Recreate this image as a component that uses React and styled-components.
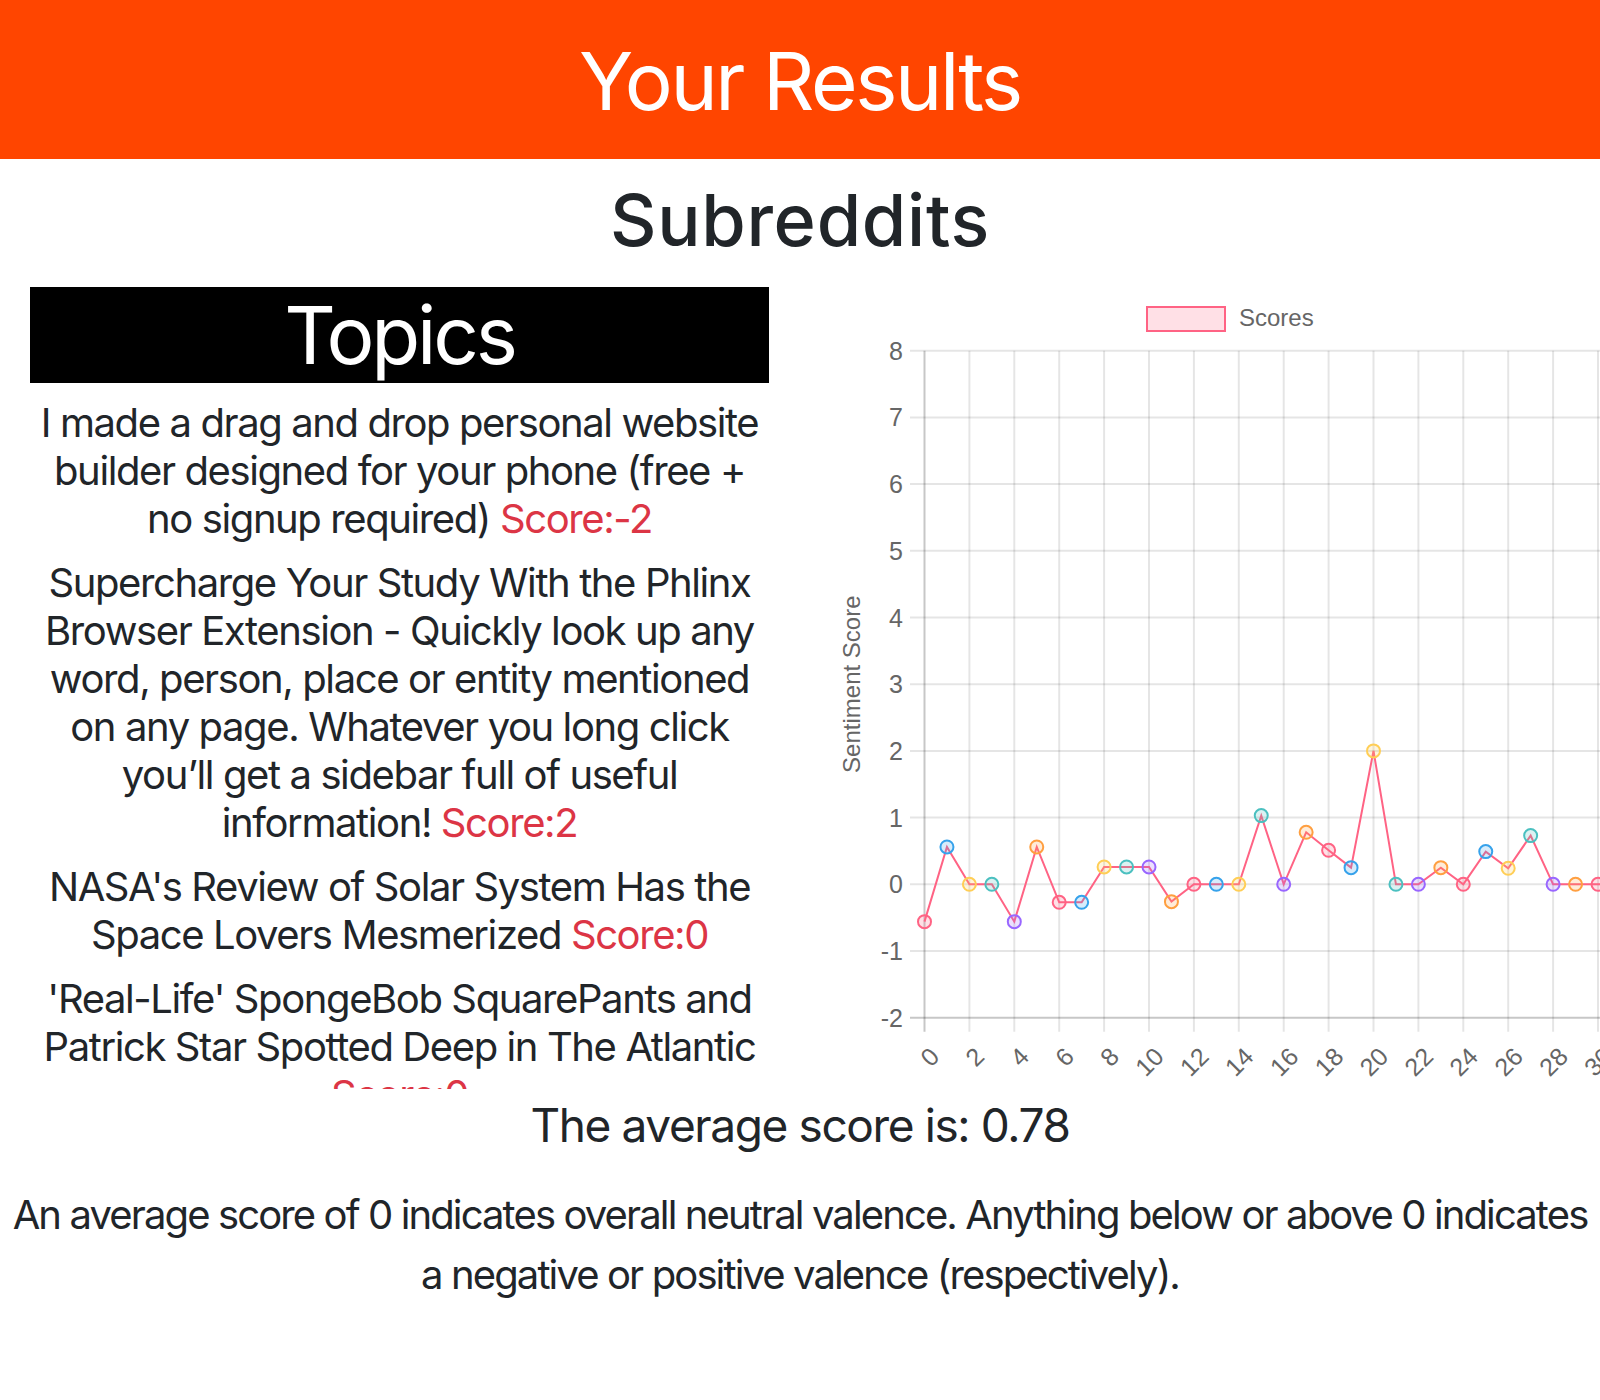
import React from "react";
import styled, { createGlobalStyle } from "styled-components";

const GlobalStyle = createGlobalStyle`
  body {
    margin: 0;
    font-family: Inter, "Noto Sans", sans-serif;
    color: #212529;
    background: #fff;
    overflow-x: hidden;
  }
`;

const Banner = styled.header`
  background-color: #ff4500;
  padding: 33px 0 30px;
`;

const BannerTitle = styled.h1`
  margin: 0;
  color: #fff;
  text-align: center;
  font-size: 80px;
  font-weight: 400;
  line-height: 1.2;
  letter-spacing: -0.03em;
`;

const SectionTitle = styled.h2`
  margin: 18px 0 24px;
  text-align: center;
  font-size: 72px;
  font-weight: 500;
  line-height: 1.2;
  letter-spacing: 0.01em;
`;

const Row = styled.div`
  display: grid;
  grid-template-columns: 800px 800px;
  height: 802px;
  overflow: hidden;
`;

const TopicsColumn = styled.div`
  padding: 0 31px 0 30px;
  overflow: hidden;
`;

const TopicsHeader = styled.div`
  background: #000;
  color: #fff;
  text-align: center;
  font-size: 80px;
  line-height: 1.2;
  letter-spacing: -0.04em;
`;

const Topic = styled.h3`
  margin: 16px 0 0;
  text-align: center;
  font-size: 40px;
  font-weight: 400;
  line-height: 1.2;
  letter-spacing: -0.035em;
`;

const Score = styled.span`
  color: #dc3545;
`;

const ChartColumn = styled.div`
  overflow: hidden;
  svg {
    display: block;
    font-family: "Liberation Sans", Arial, sans-serif;
  }
`;

const Average = styled.h2`
  margin: 9px 0 0;
  text-align: center;
  font-size: 46px;
  font-weight: 400;
  line-height: 1.2;
  letter-spacing: -0.03em;
`;

const Note = styled.p`
  margin: 31px 0 0;
  text-align: center;
  font-size: 40px;
  line-height: 1.5;
  letter-spacing: -0.047em;
`;

const topics = [
  {
    title:
      "I made a drag and drop personal website builder designed for your phone (free + no signup required)",
    score: -2,
  },
  {
    title:
      "Supercharge Your Study With the Phlinx Browser Extension - Quickly look up any word, person, place or entity mentioned on any page. Whatever you long click you’ll get a sidebar full of useful information!",
    score: 2,
  },
  {
    title: "NASA's Review of Solar System Has the Space Lovers Mesmerized",
    score: 0,
  },
  {
    title:
      "'Real-Life' SpongeBob SquarePants and Patrick Star Spotted Deep in The Atlantic",
    score: 0,
  },
];

const scores = [
  -0.56, 0.56, 0, 0, -0.56, 0.56, -0.27, -0.27, 0.26, 0.26, 0.26, -0.26, 0, 0,
  0, 1.03, 0, 0.78, 0.51, 0.25, 2, 0, 0, 0.25, 0, 0.49, 0.24, 0.73, 0, 0, 0, 0,
];

const palette = [
  "255,99,132",
  "54,162,235",
  "255,206,86",
  "75,192,192",
  "153,102,255",
  "255,159,64",
];

const X0 = 124.5;
const STEP = 22.45;
const Y_TOP = 63.7;
const UNIT = 66.7;
const cx = (i) => X0 + i * STEP;
const cy = (v) => Y_TOP + (8 - v) * UNIT;

function ScoreChart() {
  const yTicks = [8, 7, 6, 5, 4, 3, 2, 1, 0, -1, -2];
  const xTicks = [];
  for (let i = 0; i <= 30; i += 2) xTicks.push(i);
  const bottom = cy(-2);

  return (
    <svg width="800" height="802">
      {/* legend */}
      <rect
        x="347"
        y="20"
        width="78"
        height="24"
        fill="rgba(255,99,132,0.2)"
        stroke="rgb(255,99,132)"
        strokeWidth="2"
      />
      <text x="439" y="39" fontSize="24" fill="#666">
        Scores
      </text>

      {/* grid */}
      {yTicks.map((v) => (
        <g key={v}>
          <line
            x1="110"
            x2="800"
            y1={cy(v)}
            y2={cy(v)}
            stroke={v === -2 ? "rgba(0,0,0,0.22)" : "rgba(0,0,0,0.1)"}
            strokeWidth="2"
          />
          <text
            x="103"
            y={cy(v)}
            fontSize="25"
            fill="#666"
            textAnchor="end"
            dominantBaseline="central"
          >
            {v}
          </text>
        </g>
      ))}
      {xTicks.map((i) => (
        <g key={i}>
          <line
            x1={cx(i)}
            x2={cx(i)}
            y1={cy(8)}
            y2={bottom + 14}
            stroke={i === 0 ? "rgba(0,0,0,0.22)" : "rgba(0,0,0,0.1)"}
            strokeWidth="2"
          />
          <text
            transform={`translate(${cx(i) + 10}, ${bottom + 34}) rotate(-45)`}
            fontSize="25"
            fill="#666"
            textAnchor="end"
            dominantBaseline="central"
          >
            {i}
          </text>
        </g>
      ))}

      <text
        transform={`translate(60, ${(cy(8) + bottom) / 2}) rotate(-90)`}
        fontSize="24"
        fill="#666"
        textAnchor="middle"
      >
        Sentiment Score
      </text>

      {/* data */}
      <polyline
        points={scores.map((v, i) => `${cx(i)},${cy(v)}`).join(" ")}
        fill="none"
        stroke="rgb(255,99,132)"
        strokeWidth="2"
      />
      {scores.map((v, i) => {
        const c = palette[i % palette.length];
        return (
          <circle
            key={i}
            cx={cx(i)}
            cy={cy(v)}
            r="6.5"
            fill={`rgba(${c},0.2)`}
            stroke={`rgb(${c})`}
            strokeWidth="2"
          />
        );
      })}
    </svg>
  );
}

export default function App() {
  return (
    <>
      <GlobalStyle />
      <Banner>
        <BannerTitle>Your Results</BannerTitle>
      </Banner>
      <SectionTitle>Subreddits</SectionTitle>
      <Row>
        <TopicsColumn>
          <TopicsHeader>Topics</TopicsHeader>
          {topics.map((t) => (
            <Topic key={t.title}>
              {t.title} <Score>Score:{t.score}</Score>
            </Topic>
          ))}
        </TopicsColumn>
        <ChartColumn>
          <ScoreChart />
        </ChartColumn>
      </Row>
      <Average>The average score is: 0.78</Average>
      <Note>
        An average score of 0 indicates overall neutral valence. Anything below
        or above 0 indicates a negative or positive valence (respectively).
      </Note>
    </>
  );
}
